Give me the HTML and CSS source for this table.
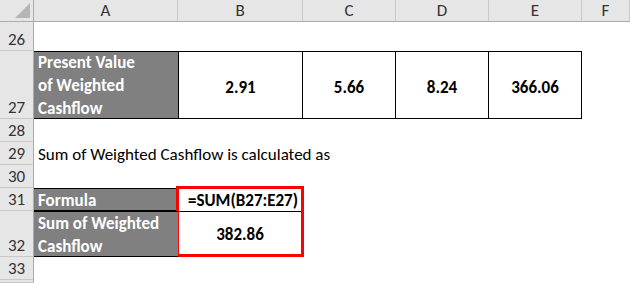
FILE: index.html
```html
<!DOCTYPE html>
<html lang="en">

<head>
    <meta charset="UTF-8">
    <meta name="viewport" content="width=device-width, initial-scale=1.0">
    <title>Weighted Cashflow</title>
    <link rel="stylesheet" href="styles.css">
</head>

<body>
    <div class="sheet">
        <!-- column headers -->
        <div class="corner">
            <svg width="15" height="15" viewBox="0 0 15 15"><polygon points="15,0 15,15 0,15" fill="#b5b5b5" /></svg>
        </div>
        <div class="col-head">A</div>
        <div class="col-head">B</div>
        <div class="col-head">C</div>
        <div class="col-head">D</div>
        <div class="col-head">E</div>
        <div class="col-head">F</div>

        <!-- 26 -->
        <div class="row-head">26</div>
        <div class="rest"></div>

        <!-- 27 -->
        <div class="row-head">27</div>
        <div class="label boxed">
            <span>Present Value</span>
            <span>of Weighted</span>
            <span>Cashflow</span>
        </div>
        <div class="num boxed first">2.91</div>
        <div class="num boxed">5.66</div>
        <div class="num boxed">8.24</div>
        <div class="num boxed">366.06</div>
        <div class="rest-f"></div>

        <!-- 28 - 30 -->
        <div class="row-head">28</div>
        <div class="rest"></div>
        <div class="row-head">29</div>
        <div class="rest note">Sum of Weighted Cashflow is calculated as</div>
        <div class="row-head">30</div>
        <div class="rest"></div>

        <!-- 31 / 32 -->
        <div class="row-head">31</div>
        <div class="label boxed">
            <span>Formula</span>
        </div>
        <div class="pick">
            <div class="formula">=SUM(B27:E27)</div>
            <div class="total">382.86</div>
        </div>
        <div class="rest-c"></div>
        <div class="row-head">32</div>
        <div class="label boxed">
            <span>Sum of Weighted</span>
            <span>Cashflow</span>
        </div>
        <div class="rest-c"></div>

        <!-- 33 -->
        <div class="row-head">33</div>
        <div class="rest"></div>
        <div class="row-head"></div>
        <div class="rest"></div>
    </div>
</body>

</html>
```

FILE: styles.css
```css
* {
    margin: 0;
    padding: 0;
    box-sizing: border-box;
}

body {
    background-color: white;
    font-family: Carlito, Lato, "Liberation Sans", sans-serif;
    font-size: 17px;
    color: black;
    overflow: hidden;
}

.sheet {
    display: grid;
    grid-template-columns: 34px 144px 125px 93px 93px 93px 1fr;
    grid-template-rows: 22px 29px 68px 23px 23px 23px 23px 46px 23px 1fr;
    height: 283px;
}

.corner {
    background-color: #e6e6e6;
    border-right: 1px solid #ababab;
    border-bottom: 1px solid #ababab;
    display: flex;
    align-items: flex-end;
    justify-content: flex-end;
    padding: 0 3px 3px 0;
}

.corner svg {
    display: block;
}

.col-head {
    background-color: #e6e6e6;
    border-right: 1px solid #c8c8c8;
    border-bottom: 1px solid #ababab;
    text-align: center;
    line-height: 21px;
    color: #333;
}

.row-head {
    background-color: #e6e6e6;
    border-right: 1px solid #ababab;
    border-bottom: 1px solid #c8c8c8;
    display: flex;
    align-items: flex-end;
    justify-content: center;
    line-height: 21px;
    color: #333;
}

.rest {
    grid-column: 2 / -1;
}

.rest-f {
    grid-column: 7;
}

.rest-c {
    grid-column: 4 / -1;
}

.note {
    display: flex;
    align-items: flex-end;
    padding-left: 4px;
    line-height: 21px;
}

.label {
    background-color: #808080;
    color: white;
    font-weight: bold;
    display: flex;
    flex-direction: column;
    justify-content: flex-end;
    gap: 4px;
    padding-left: 4px;
    line-height: 19px;
}

.boxed {
    border-top: 1px solid black;
    border-bottom: 1px solid black;
}

.num {
    border-right: 1px solid black;
    display: flex;
    align-items: center;
    justify-content: center;
    font-weight: bold;
    padding-top: 4px;
}

.num.first {
    border-left: 1px solid black;
}

.pick {
    grid-row: span 2;
    display: flex;
    flex-direction: column;
    border: 3px solid red;
    margin: -2px -1px 0 -2px;
    font-weight: bold;
}

.formula {
    height: 23px;
    border-bottom: 1px solid black;
    display: flex;
    align-items: flex-end;
    justify-content: center;
    padding-left: 6px;
    line-height: 20px;
}

.total {
    flex: 1;
    display: flex;
    align-items: center;
    justify-content: center;
    padding-top: 2px;
}
```
